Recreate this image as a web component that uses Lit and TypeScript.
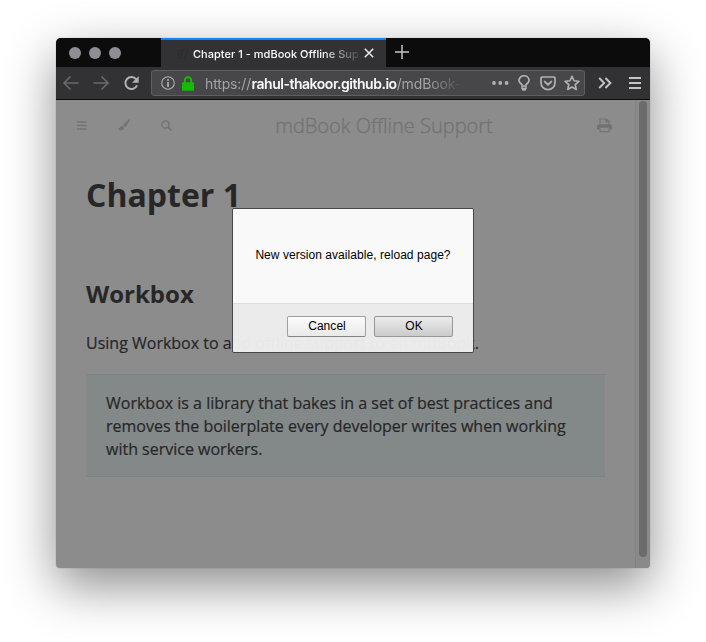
import { LitElement, html, css, svg } from "lit";
import { customElement } from "lit/decorators.js";

const arrow = svg`<path d="M16.5 8H2M8.500 1.500L2 8L8.500 14.500" fill="none" stroke="currentColor" stroke-width="1.6"/>`;

@customElement("browser-chrome")
class BrowserChrome extends LitElement {
  static styles = css`
    :host { display: block; height: 62px; background: #323234; font-family: Inter, "Liberation Sans", sans-serif; box-sizing: border-box; border-bottom: 1px solid #0c0c0d; }
    svg { display: block; flex: none; }
    .tabs { display: flex; height: 29px; background: #0c0c0d; }
    .lights { width: 105px; box-sizing: border-box; padding: 1px 0 0 13px; display: flex; gap: 8px; align-items: center; }
    .lights i { width: 12px; height: 12px; border-radius: 50%; background: #8f8e95; }
    .tab { width: 225px; box-sizing: border-box; border-top: 2px solid #0a84ff; background: #323234; display: flex; align-items: center; padding-left: 16px; color: #f9f9fa; }
    .fav { width: 11px; height: 10px; margin-right: 5px; }
    .label { width: 165px; height: 18px; line-height: 18px; font-size: 11px; font-weight: 500; letter-spacing: .02px; white-space: nowrap; overflow: hidden; -webkit-mask-image: linear-gradient(90deg, #000 78%, rgba(0,0,0,.12)); mask-image: linear-gradient(90deg, #000 78%, rgba(0,0,0,.12)); }
    .close { margin: -1px 0 0 6px; }
    .plus { margin: 7px 0 0 9px; }
    .nav { display: flex; height: 32px; align-items: center; color: #b1b1b3; }
    .back { margin-left: 6px; color: #69696b; }
    .fwd { margin-left: 14px; color: #69696b; }
    .reload { margin-left: 13px; }
    .url { margin-left: 11px; width: 434px; height: 26px; box-sizing: border-box; border: 1px solid #5f5f62; border-radius: 3px; background: #474749; display: flex; align-items: center; padding-left: 9px; }
    .lock { margin-left: 6px; }
    .addr { margin-left: 10px; width: 258px; height: 22px; line-height: 23px; font-size: 14px; letter-spacing: -.14px; color: #a3a3a5; white-space: nowrap; overflow: hidden; -webkit-mask-image: linear-gradient(90deg, #000 86%, transparent); mask-image: linear-gradient(90deg, #000 86%, transparent); }
    .addr b { color: #f9f9fa; font-weight: 600; letter-spacing: -.48px; margin-left: .5px; }
    .dots { margin-left: 29px; }
    .bulb { margin-left: 9px; }
    .pocket { margin-left: 10px; }
    .star { margin-left: 8px; }
    .more { margin-left: 13px; }
    .menu { margin-left: 17px; }
  `;
  render() {
    return html`
      <div class="tabs">
        <div class="lights"><i></i><i></i><i></i></div>
        <div class="tab">
          <svg class="fav" viewBox="0 0 11 10"><path d="M3 0h8L8 10H0ZM6 0L3 10" fill="none" stroke="#2b2b2d"/></svg>
          <div class="label">Chapter 1 - mdBook Offline Support</div>
          <svg class="close" width="10" height="10" viewBox="0 0 10 10"><path d="M.8.8l8.4 8.4M9.2.8L.8 9.2" stroke="#e4e4e5" stroke-width="1.6"/></svg>
        </div>
        <svg class="plus" width="14" height="14" viewBox="0 0 14 14"><path d="M7 0v14M0 7h14" stroke="#c4c4c5" stroke-width="1.5"/></svg>
      </div>
      <div class="nav">
        <svg class="back" width="17" height="16" viewBox="0 0 17 16">${arrow}</svg>
        <svg class="fwd" width="17" height="16" viewBox="0 0 17 16"><g transform="matrix(-1 0 0 1 17 0)">${arrow}</g></svg>
        <svg class="reload" width="17" height="16" viewBox="0 0 17 16"><path d="M13.2 4.4A6 6 0 1 0 14 10.3" fill="none" stroke="currentColor" stroke-width="2"/><path d="M15.7 1v6.7H9Z" fill="currentColor"/></svg>
        <div class="url">
          <svg width="14" height="14" viewBox="0 0 14 14"><circle cx="7" cy="7" r="6.3" fill="none" stroke="#b1b1b3" stroke-width="1.1"/><circle cx="7" cy="3.9" r="1" fill="#b1b1b3"/><path d="M7 6v5" stroke="#b1b1b3" stroke-width="1.7"/></svg>
          <svg class="lock" width="14" height="15" viewBox="0 0 14 15"><path d="M3.8 7V4.4a3.2 3.2 0 0 1 6.4 0V7" fill="none" stroke="#12bc00" stroke-width="1.9"/><rect x="1" y="6.2" width="12" height="8.5" rx="1" fill="#12bc00"/></svg>
          <div class="addr">https://<b>rahul-thakoor.github.io</b>/mdBook-offline</div>
          <svg class="dots" width="17" height="4" viewBox="0 0 17 4" fill="#b1b1b3"><circle cx="2" cy="2" r="1.9"/><circle cx="8.3" cy="2" r="1.9"/><circle cx="14.6" cy="2" r="1.9"/></svg>
          <svg class="bulb" width="12" height="16" viewBox="0 0 12 16"><path d="M4.3 10.6C4.3 9 1 8.200 1 5.400a5 4.700 0 0 1 10 0C11 8.200 7.700 9 7.700 10.600" fill="none" stroke="#b1b1b3" stroke-width="1.700"/><path d="M3.300 10.300h5.400v3.400L7.400 15.700H4.600L3.300 13.700Z" fill="#b1b1b3"/><path d="M4.700 12.300h2.600" stroke="#474749" stroke-width=".9"/></svg>
          <svg class="pocket" width="16" height="15" viewBox="0 0 16 15"><path d="M2 1h12a1 1 0 0 1 1 1v4.800a7 6.900 0 0 1-14 0V2a1 1 0 0 1 1-1Z" fill="none" stroke="#b1b1b3" stroke-width="1.700"/><path d="M4.700 5.600L8 8.700l3.300-3.100" fill="none" stroke="#b1b1b3" stroke-width="1.900" stroke-linecap="round" stroke-linejoin="round"/></svg>
          <svg class="star" width="16" height="16" viewBox="0 0 16 16"><path d="M8 1.300l2 4.500 4.900.5-3.700 3.300 1.100 4.900L8 12l-4.300 2.500 1.100-4.900L1.100 6.300 6 5.800Z" fill="none" stroke="#b1b1b3" stroke-width="1.600" stroke-linejoin="round"/></svg>
        </div>
        <svg class="more" width="14" height="12" viewBox="0 0 14 12"><path d="M1.200 1l5 5-5 5M7.400 1l5 5-5 5" fill="none" stroke="#c4c4c5" stroke-width="1.900"/></svg>
        <svg class="menu" width="12" height="12" viewBox="0 0 12 12"><path d="M0 1h12M0 6h12M0 11h12" stroke="#c4c4c5" stroke-width="1.900"/></svg>
      </div>`;
  }
}

@customElement("book-page")
class BookPage extends LitElement {
  static styles = css`
    :host { display: flex; height: 468px; background: #8c8c8c; color: #272727; font-family: "Open Sans", sans-serif; font-size: 16px; }
    svg { display: block; flex: none; }
    .page { flex: 1; padding: 0 30px; }
    .bar { height: 50px; display: flex; align-items: center; margin: 0 -7px 0 -10px; color: #737373; }
    .brush { margin-left: 31px; }
    .search { margin-left: 31px; }
    .title { flex: 1; margin-right: 1px; padding-top: 2px; text-align: center; font-size: 20px; font-weight: 300; line-height: 50px; white-space: nowrap; -webkit-text-stroke: .35px #737373; }
    h1, h2, p { margin: 0; white-space: nowrap; }
    h1 { font-size: 32px; line-height: 46px; margin-top: 22px; }
    h2 { font-size: 24px; line-height: 34px; margin-top: 59px; }
    p { line-height: 23px; margin-top: 21px; }
    p, blockquote { -webkit-text-stroke: .2px #272727; }
    blockquote { margin: 19px 0 0; padding: 17px 20px 15px; height: 103px; box-sizing: border-box; background: #838889; border: solid #7b8285; border-width: 1px 0; line-height: 23px; white-space: nowrap; }
    .track { width: 15px; box-sizing: border-box; border-left: 1px solid #818181; background: #8a8a8a; padding: 1px 0 0 3px; }
    .thumb { width: 8px; height: 456px; border-radius: 4px; background: #6b6b6b; }
  `;
  render() {
    return html`
      <div class="page">
        <div class="bar">
          <svg width="11" height="9" viewBox="0 0 11 9"><path d="M1 1h9.500M1 4.500h9.500M1 8h9.500" stroke="currentColor" stroke-width="1.400"/></svg>
          <svg class="brush" width="12" height="12" viewBox="0 0 12 12"><path d="M10.800.2c.8-.3 1.400.4 1 1.200L8.200 7.300 6.900 7.900 5.400 6.500 5.800 5.100ZM4.700 7l1.600 1.600C6 10.800 4.300 11.500 2.500 11.400.9 11.300.4 10.400.2 9c1 .5 1.500.2 1.900-.7C2.600 7.200 3.500 6.700 4.700 7Z" fill="currentColor"/></svg>
          <svg class="search" width="11" height="11" viewBox="0 0 11 11"><circle cx="4.500" cy="4.500" r="3.600" fill="none" stroke="currentColor" stroke-width="1.500"/><path d="M7.300 7.300l3.100 3.100" stroke="currentColor" stroke-width="1.700"/></svg>
          <div class="title">mdBook Offline Support</div>
          <svg class="print" width="15" height="15" viewBox="0 0 15 15"><path d="M3 7V1h6.500L12 3.500V7M9 1v3h3M3 10.500v3.200h9v-3.200" fill="none" stroke="currentColor" stroke-width="1.200"/><path d="M2 6.200h11a2 2 0 0 1 2 2v3.300H12.300V9.800H2.700v1.700H0V8.200a2 2 0 0 1 2-2Z" fill="currentColor"/></svg>
        </div>
        <h1>Chapter 1</h1>
        <h2>Workbox</h2>
        <p>Using Workbox to add offline support to an mdBook.</p>
        <blockquote>Workbox is a library that bakes in a set of best practices and<br>removes the boilerplate every developer writes when working<br>with service workers.</blockquote>
      </div>
      <div class="track"><div class="thumb"></div></div>`;
  }
}

@customElement("confirm-dialog")
class ConfirmDialog extends LitElement {
  static styles = css`
    :host { display: block; width: 242px; height: 145px; box-sizing: border-box; border: 1px solid #474747; border-radius: 2px; overflow: hidden; font: 12px "Liberation Sans", sans-serif; color: #000; }
    .msg { height: 94px; box-sizing: border-box; padding-top: 38px; line-height: 16px; letter-spacing: .05px; text-align: center; background: #f9f9f9; white-space: nowrap; }
    .foot { height: 49px; box-sizing: border-box; border-top: 1px solid #dedede; background: rgba(238,238,238,.968); display: flex; justify-content: flex-end; gap: 8px; padding: 12px 20px 0 0; }
    button { width: 79px; height: 21px; padding: 0 0 1px 1px; margin: 0; box-sizing: border-box; border: 1px solid #a0a0a0; border-bottom-color: #838383; border-radius: 2px; font: inherit; font-size: 12px; letter-spacing: .05px; color: #000; background: linear-gradient(#fcfcfc, #e9e9e9); }
    .ok { background: linear-gradient(#ececec, #cbcbcb); border-color: #979797; }
  `;
  render() {
    return html`
      <div class="msg">New version available, reload page?</div>
      <div class="foot"><button>Cancel</button><button class="ok">OK</button></div>`;
  }
}

@customElement("app-root")
class AppRoot extends LitElement {
  static styles = css`
    :host { display: block; width: 706px; height: 642px; box-sizing: border-box; padding: 38px 56px 0; background: #fff; overflow: hidden; }
    .window { position: relative; width: 594px; height: 530px; border-radius: 5px 5px 4px 4px; box-shadow: 0 0 1px rgba(0,0,0,.45), 0 18px 50px rgba(0,0,0,.45); }
    .clip { height: 530px; border-radius: inherit; overflow: hidden; }
    confirm-dialog { position: absolute; left: 176px; top: 170px; }
  `;
  render() {
    return html`
      <div class="window">
        <div class="clip"><browser-chrome></browser-chrome><book-page></book-page></div>
        <confirm-dialog></confirm-dialog>
      </div>`;
  }
}
